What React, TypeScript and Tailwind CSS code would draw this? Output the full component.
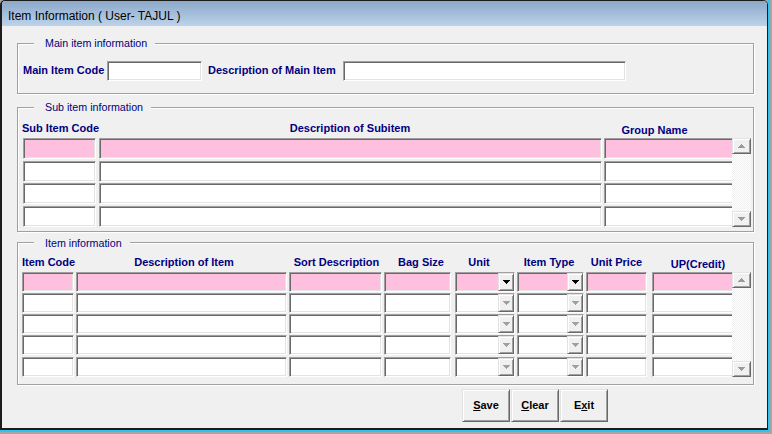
import React from "react";

const FONT = "font-['Liberation_Sans',Arial,sans-serif]";
const SUNKEN =
  "border border-t-[#a0a0a0] border-l-[#a0a0a0] border-b-white border-r-white shadow-[inset_1px_1px_0_#696969,inset_-1px_-1px_0_#e3e3e3]";
const SUNKEN_CUT =
  "border border-r-0 border-t-[#a0a0a0] border-l-[#a0a0a0] border-b-white shadow-[inset_1px_1px_0_#696969,inset_0_-1px_0_#e3e3e3]";
const RAISED =
  "border border-t-[#e3e3e3] border-l-[#e3e3e3] border-b-[#696969] border-r-[#696969] shadow-[inset_1px_1px_0_#ffffff,inset_-1px_-1px_0_#a0a0a0]";
const GROUP =
  "w-[737px] border border-[#a0a0a0] shadow-[inset_1px_1px_0_#ffffff,1px_1px_0_#ffffff]";
const LEGEND =
  "ml-[16px] pl-[11px] pr-[8px] bg-[#f0f0f0] text-[10.7px] leading-[14px] text-[#000080]";
const LABEL = "text-[11px] font-bold leading-[14px] text-[#000080] whitespace-nowrap";

function DownArrow({ color }: { color: string }) {
  return (
    <svg width="7" height="4" viewBox="0 0 7 4" shapeRendering="crispEdges">
      <path d="M0 0h7v1h-1v1h-1v1h-1v1h-1v-1h-1v-1h-1v-1h-1z" fill={color} />
    </svg>
  );
}

function UpArrow({ color }: { color: string }) {
  return (
    <svg width="7" height="4" viewBox="0 0 7 4" shapeRendering="crispEdges">
      <path d="M3 0h1v1h1v1h1v1h1v1h-7v-1h1v-1h1v-1h1z" fill={color} />
    </svg>
  );
}

function ScrollBar() {
  return (
    <div className="w-[19px] flex flex-col bg-[image:repeating-conic-gradient(#ffffff_0%_25%,#f0f0f0_0%_50%)] bg-[length:2px_2px]">
      <div className={`h-[16px] bg-[#f0f0f0] ${RAISED} flex items-center justify-center`}>
        <UpArrow color="#9a9a9a" />
      </div>
      <div className="flex-1" />
      <div className={`h-[16px] bg-[#f0f0f0] ${RAISED} flex items-center justify-center`}>
        <DownArrow color="#9a9a9a" />
      </div>
    </div>
  );
}

function Cell({ w, pink, cut }: { w: string; pink: boolean; cut?: boolean }) {
  return <div className={`${w} h-full ${pink ? "bg-[#ffc0e0]" : "bg-white"} ${cut ? SUNKEN_CUT : SUNKEN}`} />;
}

function Combo({ w, pink }: { w: string; pink: boolean }) {
  return (
    <div className={`${w} h-full flex justify-end ${pink ? "bg-[#ffc0e0]" : "bg-white"} ${SUNKEN}`}>
      <div className={`w-[16px] h-full bg-[#f0f0f0] ${RAISED} flex items-center justify-center`}>
        <DownArrow color={pink ? "#000000" : "#a0a0a0"} />
      </div>
    </div>
  );
}

export default function App() {
  const subRows = [0, 1, 2, 3];
  const itemRows = [0, 1, 2, 3, 4];
  return (
    <div className={`w-[772px] h-[434px] ${FONT} border-r-2 border-b-2 border-[#a6a6a6] bg-[#a6a6a6]`}>
      <div className="w-full h-full border-r-2 border-b-2 border-[#2ec2ec]">
        <div className="w-full h-full flex flex-col border-l-2 border-t border-r border-b-2 border-[#1c1c1c] rounded-t-[5px] overflow-hidden bg-[#f0f0f0]">
          <div className="h-[25px] shrink-0 bg-linear-to-b from-[#8ca8c9] to-[#bcd3eb] flex items-center pl-[6px] pt-[4px] text-[12px] leading-[14px] text-black">
            Item Information ( User- TAJUL )
          </div>
          <div className="flex-1 flex flex-col pl-[15px]">
            {/* Main item information */}
            <fieldset className={`mt-[10px] ${GROUP}`}>
              <legend className={LEGEND}>Main item information</legend>
              <div className="pl-[5px] pt-[11px] pb-[12px] flex items-center h-[20px] box-content">
                <div className={`${LABEL} w-[84px] pb-[3px]`}>Main Item Code</div>
                <div className={`w-[95px] h-[20px] bg-white ${SUNKEN}`} />
                <div className={`${LABEL} ml-[6px] w-[135px] pb-[3px]`}>Description of Main Item</div>
                <div className={`w-[283px] h-[20px] bg-white ${SUNKEN}`} />
              </div>
            </fieldset>

            {/* Sub item information */}
            <fieldset className={`mt-[6px] ${GROUP}`}>
              <legend className={LEGEND}>Sub item information</legend>
              <div className="pl-[5px] pt-[7px] pb-[4px]">
                <div className="flex h-[14px] items-start">
                  <div className={`${LABEL} w-[76px] -ml-[1px]`}>Sub Item Code</div>
                  <div className={`${LABEL} w-[504px] text-center`}>Description of Subitem</div>
                  <div className={`${LABEL} w-[128px] text-center pr-[23px] pt-[2px]`}>Group Name</div>
                </div>
                <div className="mt-[3px] flex">
                  <div className="flex flex-col gap-[1.5px]">
                    {subRows.map((i) => (
                      <div key={i} className="flex h-[21px]">
                        <Cell w="w-[73px]" pink={i === 0} />
                        <div className="w-[3px]" />
                        <Cell w="w-[503px]" pink={i === 0} />
                        <div className="w-[2px]" />
                        <Cell w="w-[128px]" pink={i === 0} cut />
                      </div>
                    ))}
                  </div>
                  <ScrollBar />
                </div>
              </div>
            </fieldset>

            {/* Item information */}
            <fieldset className={`mt-[4px] ${GROUP}`}>
              <legend className={LEGEND}>Item information</legend>
              <div className="pl-[4px] pt-[5px] pb-[7px]">
                <div className="flex h-[14px] items-start">
                  <div className={`${LABEL} w-[54px]`}>Item Code</div>
                  <div className={`${LABEL} w-[213px] text-center pl-[3px]`}>Description of Item</div>
                  <div className={`${LABEL} w-[95px] text-center`}>Sort Description</div>
                  <div className={`${LABEL} w-[71px] text-center pl-[3px]`}>Bag Size</div>
                  <div className={`${LABEL} w-[62px] text-center pr-[14px]`}>Unit</div>
                  <div className={`${LABEL} w-[69px] text-center pr-[5px]`}>Item Type</div>
                  <div className={`${LABEL} w-[66px] text-center pr-[5px]`}>Unit Price</div>
                  <div className={`${LABEL} w-[80px] text-center pl-[12px] pt-[2px]`}>UP(Credit)</div>
                </div>
                <div className="mt-[3px] flex">
                  <div className="flex flex-col gap-[1.33px]">
                    {itemRows.map((i) => (
                      <div key={i} className="flex h-[20px]">
                        <Cell w="w-[52px]" pink={i === 0} />
                        <div className="w-[2px]" />
                        <Cell w="w-[211px]" pink={i === 0} />
                        <div className="w-[2px]" />
                        <Cell w="w-[93px]" pink={i === 0} />
                        <div className="w-[2px]" />
                        <Cell w="w-[67px]" pink={i === 0} />
                        <div className="w-[4px]" />
                        <Combo w="w-[60px]" pink={i === 0} />
                        <div className="w-[2px]" />
                        <Combo w="w-[67px]" pink={i === 0} />
                        <div className="w-[2px]" />
                        <Cell w="w-[61px]" pink={i === 0} />
                        <div className="w-[5px]" />
                        <Cell w="w-[80px]" pink={i === 0} cut />
                      </div>
                    ))}
                  </div>
                  <ScrollBar />
                </div>
              </div>
            </fieldset>

            {/* Buttons */}
            <div className="mt-[4px] ml-[445px] flex gap-[1px]">
              <button className={`w-[48px] h-[33px] bg-[#f0f0f0] ${RAISED} text-[11px] font-bold text-black flex items-center justify-center`}>
                <span><u>S</u>ave</span>
              </button>
              <button className={`w-[48px] h-[33px] bg-[#f0f0f0] ${RAISED} text-[11px] font-bold text-black flex items-center justify-center`}>
                <span><u>C</u>lear</span>
              </button>
              <button className={`w-[48px] h-[33px] bg-[#f0f0f0] ${RAISED} text-[11px] font-bold text-black flex items-center justify-center`}>
                <span>E<u>x</u>it</span>
              </button>
            </div>
          </div>
        </div>
      </div>
    </div>
  );
}
